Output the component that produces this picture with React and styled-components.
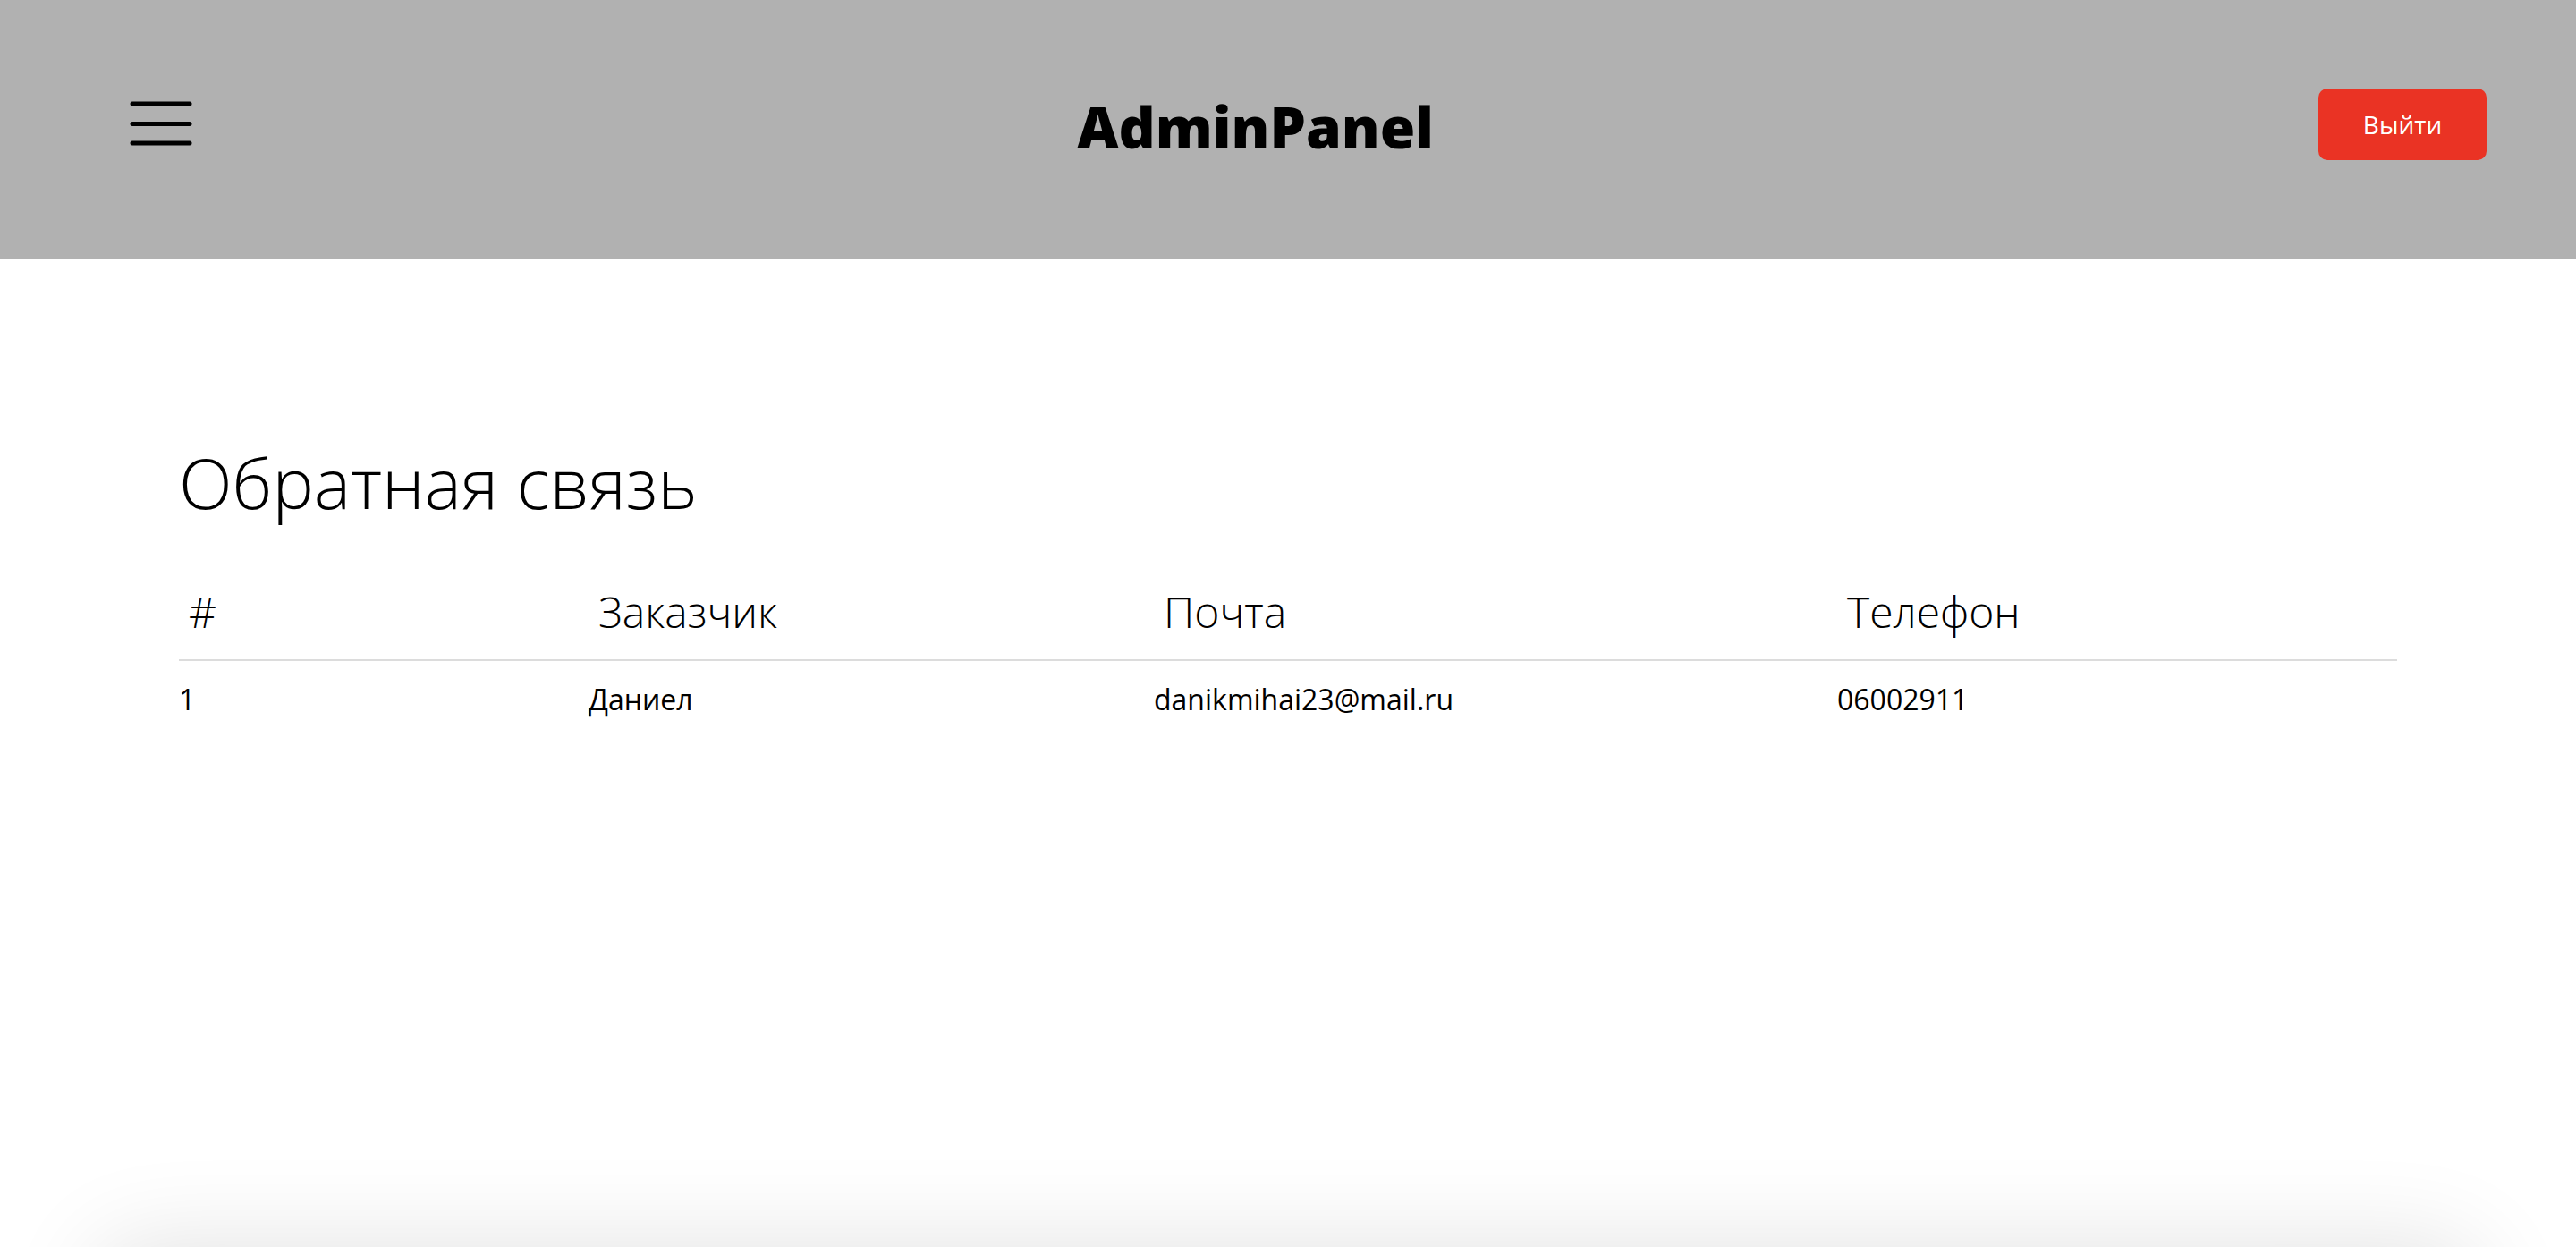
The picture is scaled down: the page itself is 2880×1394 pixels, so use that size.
import styled, { createGlobalStyle } from "styled-components"

const GlobalStyle = createGlobalStyle`
  html, body {
    margin: 0;
    padding: 0;
    background: #fff;
    font-family: "Open Sans", "Noto Sans", sans-serif;
    color: #000;
  }
`

const Header = styled.header`
  height: 289px;
  box-sizing: border-box;
  background: #b1b1b1;
  display: flex;
  align-items: center;
  justify-content: space-between;
  padding: 0 100px 0 145px;
`

const MenuButton = styled.button`
  border: none;
  background: transparent;
  padding: 0;
  width: 70px;
  height: 50px;
  margin-top: -14px;
  cursor: pointer;
  display: flex;
`

const Logo = styled.h1`
  margin: 0 0 6px 0;
  font-size: 64px;
  font-weight: 800;
  line-height: 1;
`

const LogoutButton = styled.button`
  width: 188px;
  height: 80px;
  margin-top: -12px;
  border: none;
  border-radius: 10px;
  background: #ea3324;
  color: #fff;
  font-family: inherit;
  font-size: 28px;
  cursor: pointer;
`

const Main = styled.main`
  padding: 210px 200px 0;
  min-height: 1105px;
  box-sizing: border-box;
`

const Title = styled.h2`
  margin: 0 0 81px 0;
  font-size: 78px;
  font-weight: 300;
  line-height: 80px;
`

const Table = styled.table`
  width: 100%;
  table-layout: fixed;
  border-collapse: collapse;
`

const HeadCell = styled.th`
  text-align: left;
  font-size: 48px;
  font-weight: 300;
  line-height: 48px;
  padding: 0 0 29px 11px;
  border-bottom: 2px solid #dcdcdc;
`

const Cell = styled.td`
  font-size: 32px;
  font-weight: 400;
  line-height: 32px;
  padding: 27px 0 0 0;
`

const Footer = styled.footer`
  height: 200px;
  margin: 0 110px;
  border-radius: 40px;
  background: #fff;
  box-shadow: 0 0 110px rgba(0, 0, 0, 0.12);
`

const columns = [
  { key: "id", label: "#", width: 458 },
  { key: "name", label: "Заказчик", width: 632 },
  { key: "email", label: "Почта", width: 764 },
  { key: "phone", label: "Телефон", width: 626 },
]

const feedback = [
  { id: 1, name: "Даниел", email: "danikmihai23@mail.ru", phone: "06002911" },
]

function MenuIcon() {
  return (
    <svg width="70" height="50" viewBox="0 0 70 50">
      <g stroke="#000" strokeWidth="5" strokeLinecap="round">
        <line x1="3" y1="3" x2="67" y2="3" />
        <line x1="3" y1="25.5" x2="67" y2="25.5" />
        <line x1="3" y1="47" x2="67" y2="47" />
      </g>
    </svg>
  )
}

export default function App() {
  return (
    <>
      <GlobalStyle />
      <Header>
        <MenuButton aria-label="menu">
          <MenuIcon />
        </MenuButton>
        <Logo>AdminPanel</Logo>
        <LogoutButton>Выйти</LogoutButton>
      </Header>

      <Main>
        <Title>Обратная связь</Title>
        <Table>
          <colgroup>
            {columns.map((c) => (
              <col key={c.key} style={{ width: c.width }} />
            ))}
          </colgroup>
          <thead>
            <tr>
              {columns.map((c) => (
                <HeadCell key={c.key}>{c.label}</HeadCell>
              ))}
            </tr>
          </thead>
          <tbody>
            {feedback.map((row) => (
              <tr key={row.id}>
                {columns.map((c) => (
                  <Cell key={c.key}>{row[c.key]}</Cell>
                ))}
              </tr>
            ))}
          </tbody>
        </Table>
      </Main>
      <Footer />
    </>
  )
}
